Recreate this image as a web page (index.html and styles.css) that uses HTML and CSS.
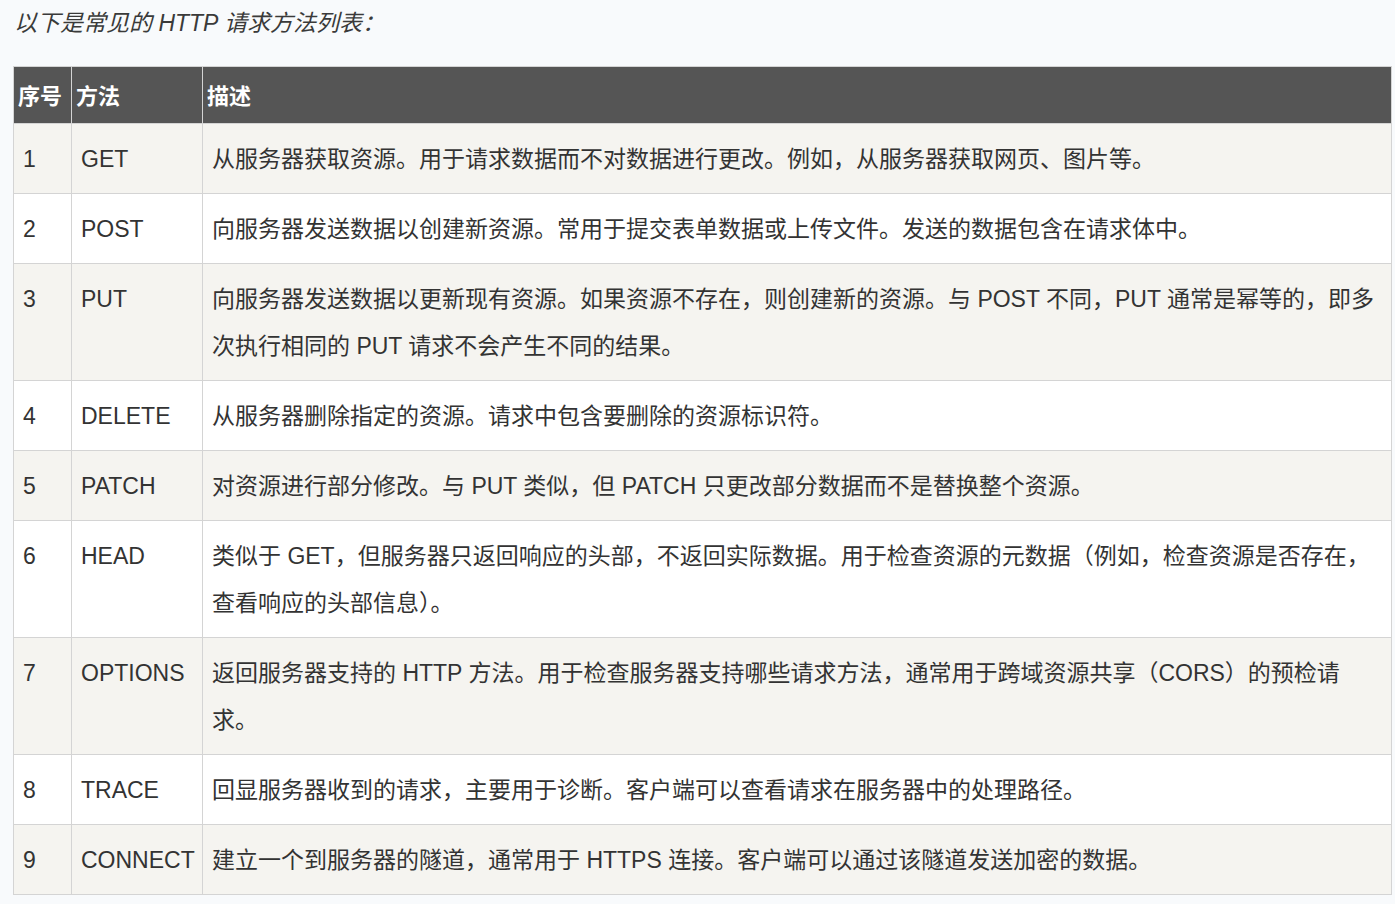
FILE: index.html
```html
<!DOCTYPE html>
<html lang="zh-CN">
<head>
  <meta charset="UTF-8">
  <meta name="viewport" content="width=device-width, initial-scale=1.0">
  <title>HTTP 请求方法</title>
  <link rel="stylesheet" href="styles.css">
</head>
<body>
  <div class="content">
    <p class="intro">以下是常见的 HTTP 请求方法列表：</p>
    <table class="methods">
      <thead>
        <tr>
          <th class="col-no">序号</th>
          <th class="col-method">方法</th>
          <th>描述</th>
        </tr>
      </thead>
      <tbody>
        <tr>
          <td>1</td>
          <td>GET</td>
          <td>从服务器获取资源。用于请求数据而不对数据进行更改。例如，从服务器获取网页、图片等。</td>
        </tr>
        <tr>
          <td>2</td>
          <td>POST</td>
          <td>向服务器发送数据以创建新资源。常用于提交表单数据或上传文件。发送的数据包含在请求体中。</td>
        </tr>
        <tr>
          <td>3</td>
          <td>PUT</td>
          <td>向服务器发送数据以更新现有资源。如果资源不存在，则创建新的资源。与 POST 不同，PUT 通常是幂等的，即多次执行相同的 PUT 请求不会产生不同的结果。</td>
        </tr>
        <tr>
          <td>4</td>
          <td>DELETE</td>
          <td>从服务器删除指定的资源。请求中包含要删除的资源标识符。</td>
        </tr>
        <tr>
          <td>5</td>
          <td>PATCH</td>
          <td>对资源进行部分修改。与 PUT 类似，但 PATCH 只更改部分数据而不是替换整个资源。</td>
        </tr>
        <tr>
          <td>6</td>
          <td>HEAD</td>
          <td>类似于 GET，但服务器只返回响应的头部，不返回实际数据。用于检查资源的元数据（例如，检查资源是否存在，查看响应的头部信息）。</td>
        </tr>
        <tr>
          <td>7</td>
          <td>OPTIONS</td>
          <td>返回服务器支持的 HTTP 方法。用于检查服务器支持哪些请求方法，通常用于跨域资源共享（CORS）的预检请求。</td>
        </tr>
        <tr>
          <td>8</td>
          <td>TRACE</td>
          <td>回显服务器收到的请求，主要用于诊断。客户端可以查看请求在服务器中的处理路径。</td>
        </tr>
        <tr>
          <td>9</td>
          <td>CONNECT</td>
          <td>建立一个到服务器的隧道，通常用于 HTTPS 连接。客户端可以通过该隧道发送加密的数据。</td>
        </tr>
      </tbody>
    </table>
  </div>
</body>
</html>
```

FILE: styles.css
```css
body { margin: 0; background: #f8fafc; color: #333; font-family: "Liberation Sans", "Noto Sans CJK SC", sans-serif; font-size: 23px; }
.content { padding: 0 0 0 13px; }
.intro { margin: 0 0 20px 1px; line-height: 46px; font-style: italic; color: #3a3a3a; }
.methods { border-collapse: collapse; width: 1379px; table-layout: fixed; }
.methods th, .methods td { border: 1px solid #d4d4d4; text-align: left; }
.methods th { background: #555; color: #fff; font-weight: bold; font-size: 22px; line-height: 52px; padding: 4px 4px 0; }
.methods td { padding: 12px 9px 10px; line-height: 47px; vertical-align: top; }
.col-no { width: 49px; }
.methods .col-method { width: 122px; }
.methods tbody tr:nth-child(odd) { background: #f5f4f0; }
.methods tbody tr:nth-child(even) { background: #fff; }
```
